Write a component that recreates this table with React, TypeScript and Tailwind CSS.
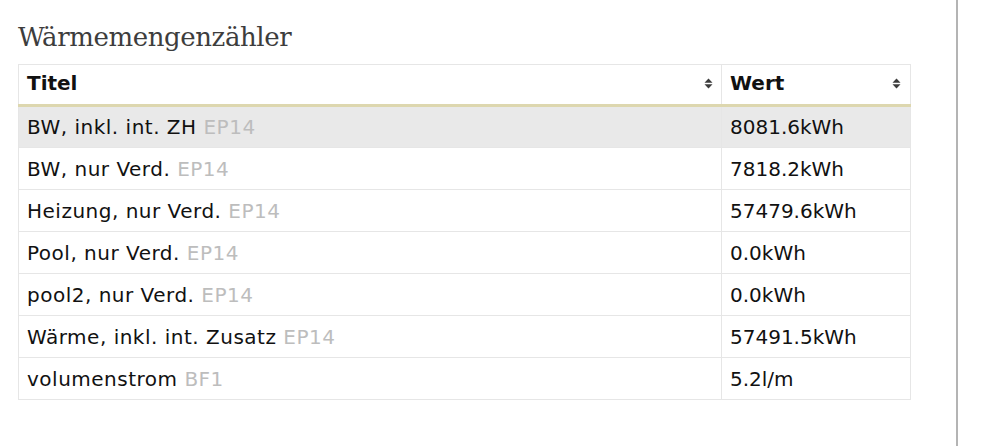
const rows = [
  { title: 'BW, inkl. int. ZH', tag: 'EP14', value: '8081.6kWh', active: true },
  { title: 'BW, nur Verd.', tag: 'EP14', value: '7818.2kWh' },
  { title: 'Heizung, nur Verd.', tag: 'EP14', value: '57479.6kWh' },
  { title: 'Pool, nur Verd.', tag: 'EP14', value: '0.0kWh' },
  { title: 'pool2, nur Verd.', tag: 'EP14', value: '0.0kWh' },
  { title: 'Wärme, inkl. int. Zusatz', tag: 'EP14', value: '57491.5kWh' },
  { title: 'volumenstrom', tag: 'BF1', value: '5.2l/m' },
];

function SortIcon() {
  return (
    <svg width="9" height="11" viewBox="0 0 9 11" className="shrink-0">
      <path d="M4.5 0.5 L8.5 4.8 L0.5 4.8 Z" fill="#3c3c3c" />
      <path d="M0.5 6.2 L8.5 6.2 L4.5 10.5 Z" fill="#3c3c3c" />
    </svg>
  );
}

export default function App() {
  return (
    <div className="w-full h-[446px] bg-white overflow-hidden">
      <div className="w-[958px] h-full border-r-2 border-[#b4b4b4] pl-[18px] pt-[20px]">
        <h2 className="text-[26px] leading-[34px] text-[#3d3d3d] font-['DejaVu_Serif',serif] tracking-[-0.4px]">
          Wärmemengenzähler
        </h2>
        <table className="mt-[10px] w-[893px] border-collapse font-['DejaVu_Sans',sans-serif] text-[20px] text-[#111]">
          <thead>
            <tr className="h-[41px]">
              <th className="w-[703px] border border-[#e6e6e6] border-b-[3px] border-b-[#ddd7af] px-[8px] pb-[3px] text-left font-bold">
                <div className="flex items-center justify-between">
                  <span>Titel</span>
                  <SortIcon />
                </div>
              </th>
              <th className="border border-[#e6e6e6] border-b-[3px] border-b-[#ddd7af] px-[8px] pb-[3px] text-left font-bold">
                <div className="flex items-center justify-between pr-[1px]">
                  <span>Wert</span>
                  <SortIcon />
                </div>
              </th>
            </tr>
          </thead>
          <tbody>
            {rows.map((r) => (
              <tr key={r.title} className={r.active ? 'h-[42px] bg-[#e9e9e9]' : 'h-[42px] bg-white'}>
                <td className="border border-[#e6e6e6] px-[8px] tracking-[0.5px]">
                  {r.title} <span className="text-[#bdbdbd]">{r.tag}</span>
                </td>
                <td className="border border-[#e6e6e6] px-[8px]">{r.value}</td>
              </tr>
            ))}
          </tbody>
        </table>
      </div>
    </div>
  );
}
